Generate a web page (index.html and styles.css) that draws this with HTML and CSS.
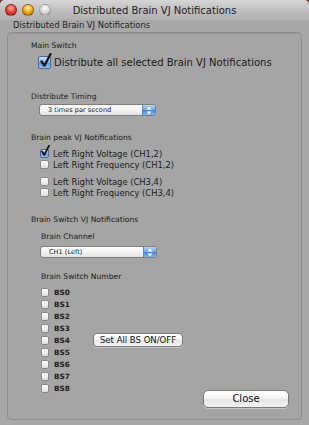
FILE: index.html
```html
<!DOCTYPE html>
<html lang="en">
  <head>
    <meta charset="utf-8" />
    <title>Distributed Brain VJ Notifications</title>
    <link rel="stylesheet" href="styles.css">
  </head>
  <body>
    <div class="window">
      <div class="titlebar">
        <div class="lights">
          <span class="light light--close"></span>
          <span class="light light--min"></span>
          <span class="light light--zoom"></span>
        </div>
        <div class="title">Distributed Brain VJ Notifications</div>
        <div></div>
      </div>
      <div class="subtitle">Distributed Brain VJ Notifications</div>

      <div class="box">
        <div class="label">Main Switch</div>
        <label class="check check--large">
          <span class="check__box is-checked">
            <svg class="check__mark" width="13" height="15" viewBox="0 0 13 15"><path d="M2.5 8.5 L5.5 12.5 L11.5 1" fill="none" stroke="#111" stroke-width="2.2" stroke-linecap="round" stroke-linejoin="round"/></svg>
          </span>
          Distribute all selected Brain VJ Notifications
        </label>

        <div class="label label--gap-l">Distribute Timing</div>
        <div class="popup">
          <span class="popup__text">3 times par second</span>
          <span class="popup__arrows">
            <svg width="6" height="9" viewBox="0 0 6 9"><path d="M3 0.5 L5.5 3.5 H0.5 Z M3 8.5 L5.5 5.5 H0.5 Z" fill="#fff"/></svg>
          </span>
        </div>

        <div class="label label--gap-m">Brain peak VJ Notifications</div>
        <div class="checks">
          <label class="check">
            <span class="check__box is-checked">
              <svg class="check__mark" width="10" height="12" viewBox="0 0 10 12"><path d="M2 6.5 L4.3 9.8 L9 0.8" fill="none" stroke="#111" stroke-width="1.8" stroke-linecap="round" stroke-linejoin="round"/></svg>
            </span>
            Left Right Voltage (CH1,2)
          </label>
          <label class="check"><span class="check__box"></span>Left Right Frequency (CH1,2)</label>
          <label class="check check--spaced"><span class="check__box"></span>Left Right Voltage (CH3,4)</label>
          <label class="check"><span class="check__box"></span>Left Right Frequency (CH3,4)</label>
        </div>

        <div class="label label--gap-m">Brain Switch VJ Notifications</div>
        <div class="sub">
          <div class="label label--gap-s">Brain Channel</div>
          <div class="popup popup--channel">
            <span class="popup__text">CH1 (Left)</span>
            <span class="popup__arrows">
              <svg width="6" height="9" viewBox="0 0 6 9"><path d="M3 0.5 L5.5 3.5 H0.5 Z M3 8.5 L5.5 5.5 H0.5 Z" fill="#fff"/></svg>
            </span>
          </div>

          <div class="label label--gap-number">Brain Switch Number</div>
          <div class="switches">
            <div class="bs-list">
              <label class="bs"><span class="check__box check__box--bs"></span>BS0</label>
              <label class="bs"><span class="check__box check__box--bs"></span>BS1</label>
              <label class="bs"><span class="check__box check__box--bs"></span>BS2</label>
              <label class="bs"><span class="check__box check__box--bs"></span>BS3</label>
              <label class="bs"><span class="check__box check__box--bs"></span>BS4</label>
              <label class="bs"><span class="check__box check__box--bs"></span>BS5</label>
              <label class="bs"><span class="check__box check__box--bs"></span>BS6</label>
              <label class="bs"><span class="check__box check__box--bs"></span>BS7</label>
              <label class="bs"><span class="check__box check__box--bs"></span>BS8</label>
            </div>
            <div class="actions">
              <button class="button button--small">Set All BS ON/OFF</button>
              <button class="button button--close">Close</button>
            </div>
          </div>
        </div>
      </div>
    </div>
  </body>
</html>
```

FILE: styles.css
```css
html,
body {
  margin: 0;
  padding: 0;
}
body {
  width: 309px;
  height: 425px;
  overflow: hidden;
  background: #6b3b35;
  font-family: "DejaVu Sans", "Liberation Sans", sans-serif;
  color: #1a1a1a;
}

.window {
  height: 425px;
  display: flex;
  flex-direction: column;
  background: #a8a8a8;
  border-radius: 5px 5px 0 0;
  overflow: hidden;
}

/* title bar */
.titlebar {
  height: 20px;
  flex: none;
  display: grid;
  grid-template-columns: 1fr auto 1fr;
  align-items: center;
  background: linear-gradient(#d6d6d6, #bcbcbc 60%, #b0b0b0);
}
.lights {
  display: flex;
  gap: 5px;
  padding-left: 5px;
}
.light {
  width: 12px;
  height: 12px;
  border-radius: 50%;
  box-sizing: border-box;
  border: 1px solid rgba(0, 0, 0, 0.35);
}
.light--close {
  background: radial-gradient(circle at 50% 30%, #ffb3a8 0, #f0453a 45%, #a51710 100%);
}
.light--min {
  background: radial-gradient(circle at 50% 30%, #fff0b0 0, #f4b020 45%, #b06a00 100%);
}
.light--zoom {
  background: radial-gradient(circle at 50% 30%, #ffffff 0, #d8d8d8 50%, #9a9a9a 100%);
  border-color: rgba(0, 0, 0, 0.2);
}
.title {
  font-size: 10px;
  color: #222;
  white-space: nowrap;
}

.subtitle {
  height: 12px;
  line-height: 11px;
  padding-left: 13px;
  font-size: 8.4px;
  color: #222;
  flex: none;
}

/* group box */
.box {
  flex: 1;
  margin: 0 7px 5px;
  padding: 8px 12px 10px 23px;
  border: 1px solid #8e8e8e;
  border-radius: 4px;
  background: #a5a5a5;
  box-shadow: inset 0 1px 0 rgba(0, 0, 0, 0.06);
  display: flex;
  flex-direction: column;
  align-items: flex-start;
}

.label {
  font-size: 7.6px;
  line-height: 10px;
  white-space: nowrap;
}
.label--gap-s {
  margin-top: 7px;
}
.label--gap-m {
  margin-top: 17px;
}
.label--gap-l {
  margin-top: 23px;
}
.label--gap-number {
  margin-top: 14px;
}

/* checkboxes */
.check {
  display: flex;
  align-items: center;
  gap: 4px;
  height: 11px;
  margin-left: 9px;
  font-size: 8.4px;
  white-space: nowrap;
}
.check--large {
  height: 14px;
  margin-top: 4px;
  margin-left: 7px;
  gap: 3px;
  font-size: 10px;
}
.check--spaced {
  margin-top: 6px;
}
.checks {
  margin-top: 5px;
}
.check__box {
  position: relative;
  width: 9px;
  height: 9px;
  box-sizing: border-box;
  border: 1px solid #8a8a8a;
  border-radius: 2px;
  background: linear-gradient(#ffffff, #f0f0f0 50%, #dcdcdc);
  flex: none;
}
.check--large .check__box {
  width: 13px;
  height: 13px;
}
.check__box.is-checked {
  border-color: #4a6c9c;
  background: linear-gradient(#cfe3fa, #7fb2ec 50%, #4f91e0 51%, #8ec2f4);
}
.check__mark {
  position: absolute;
  right: -2px;
  bottom: 0;
}
.check__box--bs {
  width: 8px;
  height: 9px;
}

/* popups */
.popup {
  margin-top: 2px;
  margin-left: 8px;
  width: 117px;
  height: 12px;
  box-sizing: border-box;
  display: flex;
  border: 1px solid #7f7f7f;
  border-radius: 3px;
  background: linear-gradient(#ffffff, #f2f2f2 50%, #e2e2e2);
  overflow: hidden;
}
.popup--channel {
  margin-top: 4px;
  margin-left: -1px;
}
.popup__text {
  flex: 1;
  padding-left: 8px;
  font-size: 6.6px;
  line-height: 10px;
  white-space: nowrap;
}
.popup__arrows {
  width: 12px;
  display: flex;
  align-items: center;
  justify-content: center;
  border-left: 1px solid #5f86b8;
  background: linear-gradient(#b9d6f6, #6ea6e6 50%, #3d83db 51%, #7fb7ef);
}

/* brain switch */
.sub {
  padding-left: 10px;
  display: flex;
  flex-direction: column;
  align-items: flex-start;
  align-self: stretch;
}
.switches {
  margin-top: 4px;
  display: flex;
  align-self: stretch;
}
.bs-list {
  width: 52px;
  flex: none;
}
.bs {
  display: flex;
  align-items: center;
  gap: 5px;
  height: 12px;
  font-size: 7.3px;
  font-weight: bold;
  color: #222;
}
.actions {
  flex: 1;
  display: flex;
  flex-direction: column;
  align-items: flex-start;
}

/* buttons */
.button {
  font-family: inherit;
  color: #111;
  padding: 0;
  box-sizing: border-box;
  border: 1px solid #7a7a7a;
  background: linear-gradient(#ffffff, #f4f4f4 50%, #e4e4e4 51%, #f2f2f2);
  box-shadow: 0 1px 0 rgba(255, 255, 255, 0.35);
}
.button--small {
  margin-top: 47px;
  width: 90px;
  height: 14px;
  border-radius: 4px;
  font-size: 8.5px;
  line-height: 12px;
}
.button--close {
  margin-top: 43px;
  align-self: flex-end;
  width: 86px;
  height: 18px;
  border-radius: 5px;
  font-size: 10px;
  line-height: 16px;
}
```
